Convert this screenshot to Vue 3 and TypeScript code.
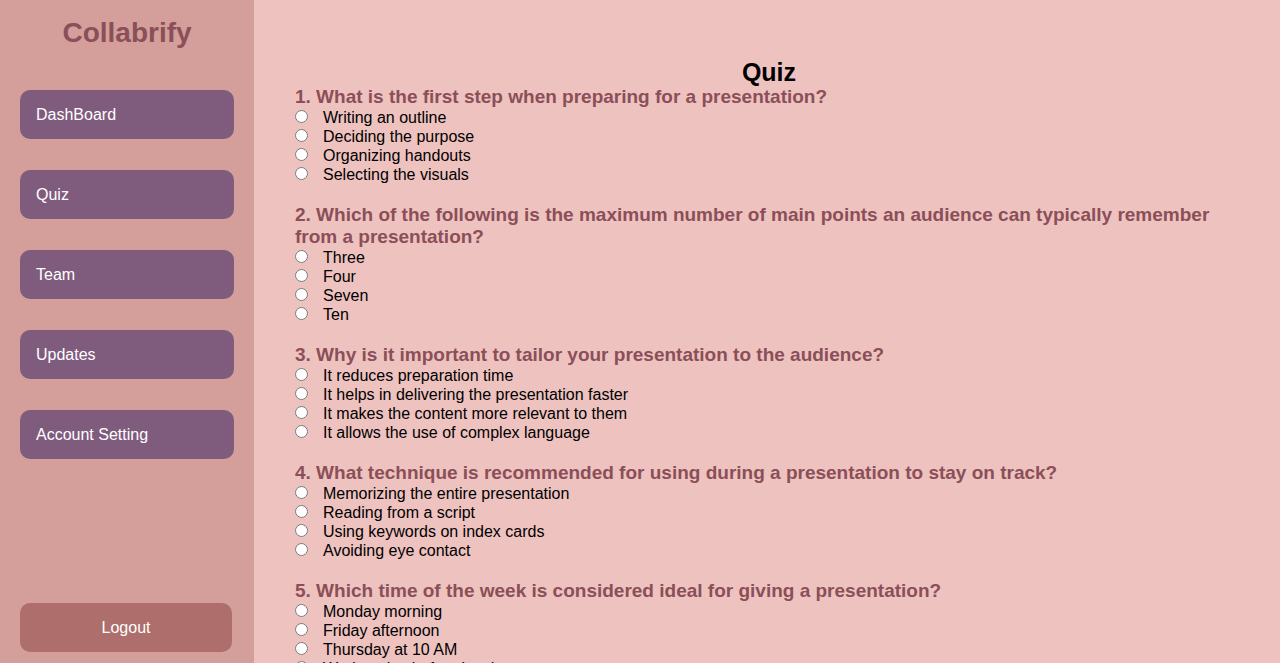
<script setup lang="ts">
import { ref } from 'vue'

interface Question {
  text: string
  options: string[]
}

const links: string[] = ['DashBoard', 'Quiz', 'Team', 'Updates', 'Account Setting']

const questions: Question[] = [
  {
    text: 'What is the first step when preparing for a presentation?',
    options: ['Writing an outline', 'Deciding the purpose', 'Organizing handouts', 'Selecting the visuals'],
  },
  {
    text: 'Which of the following is the maximum number of main points an audience can typically remember from a presentation?',
    options: ['Three', 'Four', 'Seven', 'Ten'],
  },
  {
    text: 'Why is it important to tailor your presentation to the audience?',
    options: [
      'It reduces preparation time',
      'It helps in delivering the presentation faster',
      'It makes the content more relevant to them',
      'It allows the use of complex language',
    ],
  },
  {
    text: 'What technique is recommended for using during a presentation to stay on track?',
    options: [
      'Memorizing the entire presentation',
      'Reading from a script',
      'Using keywords on index cards',
      'Avoiding eye contact',
    ],
  },
  {
    text: 'Which time of the week is considered ideal for giving a presentation?',
    options: ['Monday morning', 'Friday afternoon', 'Thursday at 10 AM', 'Wednesday before lunch'],
  },
]

const answers = ref<(string | null)[]>(questions.map(() => null))
</script>

<template>
  <div class="layout">
    <aside class="sidebar">
      <h1 class="brand">Collabrify</h1>
      <nav class="nav">
        <a v-for="link in links" :key="link" class="nav-link" href="#">{{ link }}</a>
      </nav>
      <button class="logout" type="button">Logout</button>
    </aside>
    <main class="content">
      <h2 class="title">Quiz</h2>
      <form>
        <fieldset v-for="(question, q) in questions" :key="q" class="question">
          <legend class="question-text">{{ q + 1 }}. {{ question.text }}</legend>
          <label v-for="option in question.options" :key="option" class="option">
            <input v-model="answers[q]" class="radio" type="radio" :name="`question-${q}`" :value="option" />
            <span>{{ option }}</span>
          </label>
        </fieldset>
      </form>
    </main>
  </div>
</template>

<style>
body {
  margin: 0;
  background: #eec2bf;
}
</style>

<style scoped>
.layout {
  display: flex;
  height: 100vh;
  font-family: "Liberation Sans", Arial, sans-serif;
  font-size: 16px;
  color: #000;
  background: #eec2bf;
}

.sidebar {
  box-sizing: border-box;
  flex: 0 0 254px;
  display: flex;
  flex-direction: column;
  padding: 16px 20px 11px;
  background: #d49f9a;
}

.brand {
  margin: 0 0 40px;
  font-size: 28px;
  line-height: 34px;
  text-align: center;
  color: #8a4f58;
}

.nav {
  display: flex;
  flex-direction: column;
  gap: 31px;
}

.nav-link {
  padding: 0 16px;
  border-radius: 10px;
  line-height: 49px;
  color: #fff;
  text-decoration: none;
  background: #7f5b7d;
}

.logout {
  margin: auto 2px 0 0;
  padding: 0;
  border: 0;
  border-radius: 10px;
  font: inherit;
  line-height: 49px;
  color: #fff;
  background: #ae6e6b;
  cursor: pointer;
}

.content {
  flex: 1;
  min-width: 0;
  padding: 58px 37px 0 41px;
  overflow-y: auto;
  scrollbar-width: none;
}

.title {
  margin: 0;
  font-size: 25px;
  line-height: 28px;
  text-align: center;
}

.question {
  min-width: 0;
  margin: 0 0 20px;
  padding: 0;
  border: 0;
}

.question-text {
  padding: 0;
  font-size: 19px;
  font-weight: bold;
  line-height: 22px;
  color: #8a4f58;
}

.option {
  display: flex;
  align-items: flex-start;
  gap: 15px;
  line-height: 19px;
}

.radio {
  width: 13px;
  height: 13px;
  margin: 2px 0 0;
}
</style>
